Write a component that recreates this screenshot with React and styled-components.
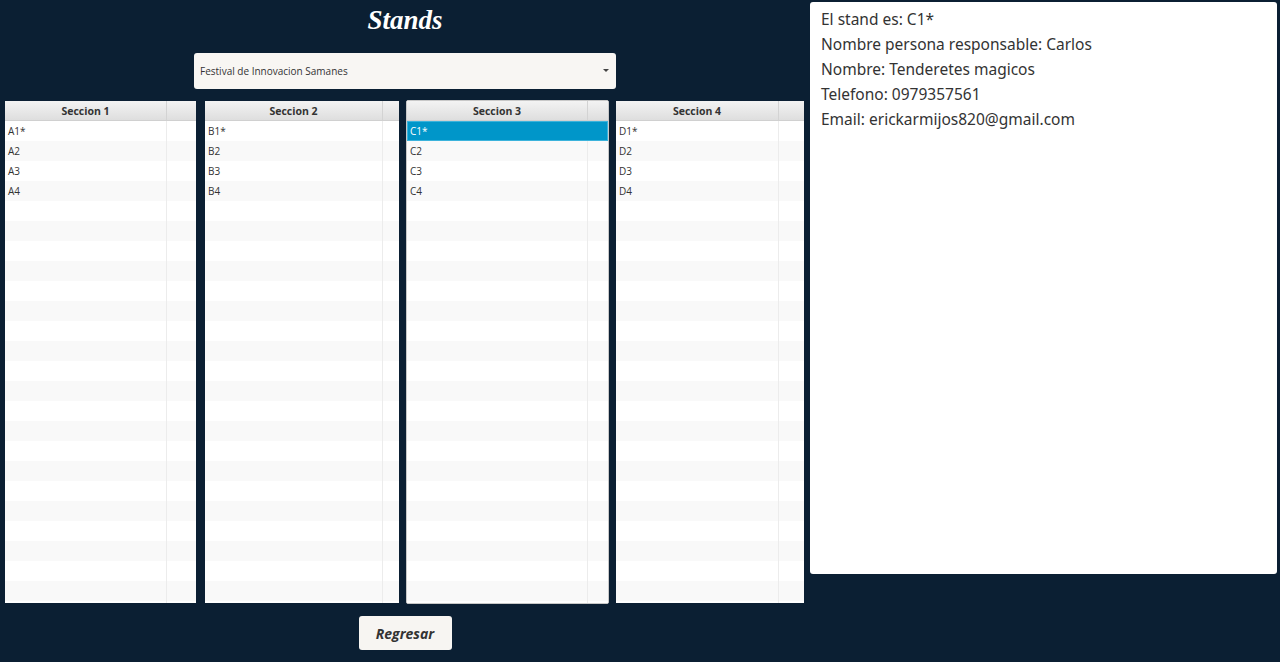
import React from 'react';
import styled, { createGlobalStyle } from 'styled-components';

const GlobalStyle = createGlobalStyle`
  html, body {
    margin: 0;
    padding: 0;
    background: #0b1f33;
  }
  body {
    font-family: "Open Sans", "Noto Sans", sans-serif;
    overflow: hidden;
  }
`;

const Page = styled.div`
  display: flex;
  width: 1280px;
  height: 662px;
  background: #0b1f33;
`;

const LeftPane = styled.div`
  width: 810px;
  display: flex;
  flex-direction: column;
  align-items: center;
`;

const Title = styled.h1`
  margin: 0;
  height: 40px;
  line-height: 41px;
  color: #ffffff;
  font-family: "Liberation Serif", "DejaVu Serif", serif;
  font-style: italic;
  font-weight: bold;
  font-size: 27px;
`;

const Combo = styled.div`
  margin-top: 13px;
  width: 422px;
  height: 36px;
  box-sizing: border-box;
  background: #f8f6f3;
  border-radius: 3px;
  display: flex;
  align-items: center;
  justify-content: space-between;
  padding: 0 7px 1px 6px;
  font-size: 10px;
  color: #333;
`;

const Arrow = styled.span`
  width: 0;
  height: 0;
  border-left: 3px solid transparent;
  border-right: 3px solid transparent;
  border-top: 3px solid #444;
`;

const TablesRow = styled.div`
  margin-top: 12px;
  align-self: stretch;
  display: flex;
  align-items: flex-start;
  padding-left: 5px;
`;

const Table = styled.div`
  width: ${p => p.$w}px;
  margin-left: ${p => p.$gap || 0}px;
  height: ${p => (p.$focused ? 504 : 502)}px;
  margin-top: ${p => (p.$focused ? -1 : 0)}px;
  box-sizing: border-box;
  border: ${p => (p.$focused ? '1px solid #c8c8c8' : 'none')};
  border-radius: ${p => (p.$focused ? '2px' : '0')};
  background: #ffffff;
  overflow: hidden;
  display: flex;
  flex-direction: column;
`;

const HeaderRow = styled.div`
  display: flex;
  height: 20px;
  flex-shrink: 0;
  background: linear-gradient(#f3f3f3, #dedede);
  border-bottom: 1px solid #d0d0d0;
  box-sizing: border-box;
`;

const HeaderCell = styled.div`
  flex: 1;
  text-align: center;
  font-size: 10.5px;
  font-weight: bold;
  color: #333;
  line-height: 21px;
  border-right: 1px solid #d3d3d3;
`;

const HeaderFiller = styled.div`
  width: ${p => p.$w}px;
`;

const Row = styled.div`
  display: flex;
  height: 20px;
  flex-shrink: 0;
  background: ${p => (p.$selected ? '#0096c9' : p.$odd ? '#f9f9f9' : '#ffffff')};
  box-shadow: ${p => (p.$selected ? 'inset 0 0 0 1px #3bb3dc' : 'none')};
`;

const Cell = styled.div`
  flex: 1;
  font-size: 10px;
  line-height: 20px;
  padding-left: 3px;
  color: ${p => (p.$selected ? '#ffffff' : '#333')};
  border-right: ${p => (p.$selected ? 'none' : '1px solid #ececec')};
`;

const Filler = styled.div`
  width: ${p => p.$w}px;
`;

const BackButton = styled.button`
  margin-top: 12px;
  width: 93px;
  height: 34px;
  border: none;
  border-radius: 3px;
  background: #f7f5f2;
  color: #333;
  font-family: "Open Sans", "Noto Sans", sans-serif;
  font-style: italic;
  font-weight: bold;
  font-size: 14px;
`;

const InfoPanel = styled.div`
  margin-top: 2px;
  width: 467px;
  height: 572px;
  box-sizing: border-box;
  background: #ffffff;
  border-radius: 3px;
  padding: 5px 11px;
  font-family: "Noto Sans", "Open Sans", sans-serif;
  font-size: 15.5px;
  color: #333;
`;

const InfoLine = styled.div`
  line-height: 25px;
`;

const tables = [
  { title: 'Seccion 1', w: 191, gap: 0, filler: 29, items: ['A1*', 'A2', 'A3', 'A4'] },
  { title: 'Seccion 2', w: 194, gap: 9, filler: 16, items: ['B1*', 'B2', 'B3', 'B4'] },
  { title: 'Seccion 3', w: 203, gap: 7, filler: 20, items: ['C1*', 'C2', 'C3', 'C4'], focused: true, selected: 0 },
  { title: 'Seccion 4', w: 188, gap: 7, filler: 25, items: ['D1*', 'D2', 'D3', 'D4'] },
];

const ROWS = 25;

const StandTable = ({ table }) => {
  const rows = Array.from({ length: ROWS }, (_, i) => table.items[i] || '');
  return (
    <Table $w={table.w} $gap={table.gap} $focused={table.focused}>
      <HeaderRow>
        <HeaderCell>{table.title}</HeaderCell>
        <HeaderFiller $w={table.filler} />
      </HeaderRow>
      {rows.map((text, i) => {
        const selected = table.selected === i;
        return (
          <Row key={i} $odd={i % 2 === 1} $selected={selected}>
            <Cell $selected={selected}>{text}</Cell>
            <Filler $w={table.filler} />
          </Row>
        );
      })}
    </Table>
  );
};

export default function App() {
  return (
    <>
      <GlobalStyle />
      <Page>
        <LeftPane>
          <Title>Stands</Title>
          <Combo>
            <span>Festival de Innovacion Samanes</span>
            <Arrow />
          </Combo>
          <TablesRow>
            {tables.map(t => (
              <StandTable key={t.title} table={t} />
            ))}
          </TablesRow>
          <BackButton>Regresar</BackButton>
        </LeftPane>
        <InfoPanel>
          <InfoLine>El stand es: C1*</InfoLine>
          <InfoLine>Nombre persona responsable: Carlos</InfoLine>
          <InfoLine>Nombre: Tenderetes magicos</InfoLine>
          <InfoLine>Telefono: 0979357561</InfoLine>
          <InfoLine>Email: erickarmijos820@gmail.com</InfoLine>
        </InfoPanel>
      </Page>
    </>
  );
}
